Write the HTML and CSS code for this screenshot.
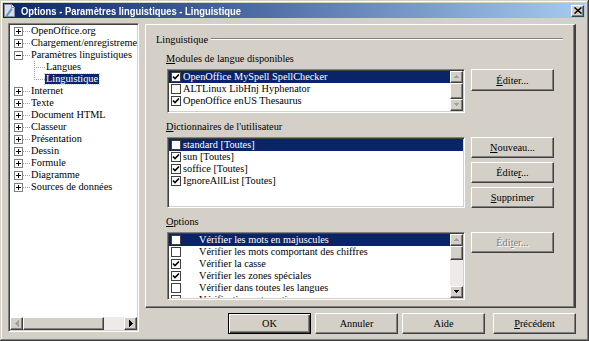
FILE: index.html
```html
<!DOCTYPE html>
<html>
<head>
    <title>Options - Paramètres linguistiques - Linguistique</title>
    <link rel="stylesheet" href="styles.css">
</head>
<body>
<div class="window">
    <div class="titlebar">
        <svg class="app-icon" width="11" height="13" viewBox="0 0 11 13">
            <path d="M0.5 0.5h7l3 3v9h-10z" fill="#dcdce8" stroke="#8a8aa0"/>
            <path d="M7.5 0.5v3h3" fill="#ffffff" stroke="#8a8aa0"/>
            <path d="M2 11l5-7 1.5 1.5-5 7z" fill="#5a9ad8"/>
            <path d="M2 11l1.5 1.5-2 0.5z" fill="#3aa070"/>
        </svg>
        <span class="title">Options - Paramètres linguistiques - Linguistique</span>
        <div class="close-btn">
            <svg width="8" height="7" viewBox="0 0 8 7"><path d="M0.5 0.5l7 6M7.5 0.5l-7 6" stroke="#000" stroke-width="1.5"/></svg>
        </div>
    </div>

    <div class="main">
        <div class="tree">
            <div class="tree-items">
                <div class="node"><span class="exp"></span><span class="link"></span><span class="label">OpenOffice.org</span></div>
                <div class="node"><span class="exp"></span><span class="link"></span><span class="label">Chargement/enregistrement</span></div>
                <div class="node"><span class="exp open"></span><span class="link"></span><span class="label">Paramètres linguistiques</span></div>
                <div class="node child"><span class="branch"></span><span class="label">Langues</span></div>
                <div class="node child"><span class="branch last"></span><span class="label selected">Linguistique</span></div>
                <div class="node"><span class="exp"></span><span class="link"></span><span class="label">Internet</span></div>
                <div class="node"><span class="exp"></span><span class="link"></span><span class="label">Texte</span></div>
                <div class="node"><span class="exp"></span><span class="link"></span><span class="label">Document HTML</span></div>
                <div class="node"><span class="exp"></span><span class="link"></span><span class="label">Classeur</span></div>
                <div class="node"><span class="exp"></span><span class="link"></span><span class="label">Présentation</span></div>
                <div class="node"><span class="exp"></span><span class="link"></span><span class="label">Dessin</span></div>
                <div class="node"><span class="exp"></span><span class="link"></span><span class="label">Formule</span></div>
                <div class="node"><span class="exp"></span><span class="link"></span><span class="label">Diagramme</span></div>
                <div class="node"><span class="exp"></span><span class="link"></span><span class="label">Sources de données</span></div>
            </div>
            <div class="hscroll">
                <div class="sbtn"><svg width="4" height="7" viewBox="0 0 4 7"><path d="M3 0h1v7h-1zM2 1h1v5h-1zM1 2h1v3h-1zM0 3h1v1h-1z" fill="#a0a0a0"/></svg></div>
                <div class="thumb h-thumb"></div>
                <div class="track"></div>
                <div class="sbtn"><svg width="4" height="7" viewBox="0 0 4 7"><path d="M0 0h1v7h-1zM1 1h1v5h-1zM2 2h1v3h-1zM3 3h1v1h-1z" fill="#000"/></svg></div>
            </div>
        </div>

        <div class="right">
            <div class="page">
                <div class="group-title"><span>Linguistique</span><span class="rule"></span></div>

                <div class="section">
                    <div class="caption"><u>M</u>odules de langue disponibles</div>
                    <div class="section-row">
                        <div class="listbox modules">
                            <div class="rows">
                                <div class="row selected"><span class="check"><svg width="8" height="8" viewBox="0 0 8 8"><path d="M1 3.5l2 2 4-4" fill="none" stroke="#000" stroke-width="1.6"/></svg></span><span class="text">OpenOffice MySpell SpellChecker</span></div>
                                <div class="row"><span class="check"></span><span class="text">ALTLinux LibHnj Hyphenator</span></div>
                                <div class="row"><span class="check"><svg width="8" height="8" viewBox="0 0 8 8"><path d="M1 3.5l2 2 4-4" fill="none" stroke="#000" stroke-width="1.6"/></svg></span><span class="text">OpenOffice enUS Thesaurus</span></div>
                            </div>
                            <div class="vscroll">
                                <div class="sbtn"><svg width="7" height="4" viewBox="0 0 7 4"><path d="M3 0h1v1h-1zM2 1h3v1h-3zM1 2h5v1h-5z" fill="#a0a0a0"/></svg></div>
                                <div class="thumb"></div>
                                <div class="sbtn"><svg width="7" height="4" viewBox="0 0 7 4"><path d="M1 0h5v1h-5zM2 1h3v1h-3zM3 2h1v1h-1z" fill="#a0a0a0"/></svg></div>
                            </div>
                        </div>
                        <div class="side-buttons">
                            <button class="btn tall"><u>É</u>diter...</button>
                        </div>
                    </div>
                </div>

                <div class="section">
                    <div class="caption"><u>D</u>ictionnaires de l'utilisateur</div>
                    <div class="section-row">
                        <div class="listbox dicts">
                            <div class="rows">
                                <div class="row selected"><span class="check"></span><span class="text">standard [Toutes]</span></div>
                                <div class="row"><span class="check"><svg width="8" height="8" viewBox="0 0 8 8"><path d="M1 3.5l2 2 4-4" fill="none" stroke="#000" stroke-width="1.6"/></svg></span><span class="text">sun [Toutes]</span></div>
                                <div class="row"><span class="check"><svg width="8" height="8" viewBox="0 0 8 8"><path d="M1 3.5l2 2 4-4" fill="none" stroke="#000" stroke-width="1.6"/></svg></span><span class="text">soffice [Toutes]</span></div>
                                <div class="row"><span class="check"><svg width="8" height="8" viewBox="0 0 8 8"><path d="M1 3.5l2 2 4-4" fill="none" stroke="#000" stroke-width="1.6"/></svg></span><span class="text">IgnoreAllList [Toutes]</span></div>
                            </div>
                        </div>
                        <div class="side-buttons">
                            <button class="btn"><u>N</u>ouveau...</button>
                            <button class="btn">Édite<u>r</u>...</button>
                            <button class="btn"><u>S</u>upprimer</button>
                        </div>
                    </div>
                </div>

                <div class="section">
                    <div class="caption"><u>O</u>ptions</div>
                    <div class="section-row">
                        <div class="listbox options">
                            <div class="rows">
                                <div class="row selected"><span class="check"></span><span class="text wide">Vérifier les mots en majuscules</span></div>
                                <div class="row"><span class="check"></span><span class="text wide">Vérifier les mots comportant des chiffres</span></div>
                                <div class="row"><span class="check"><svg width="8" height="8" viewBox="0 0 8 8"><path d="M1 3.5l2 2 4-4" fill="none" stroke="#000" stroke-width="1.6"/></svg></span><span class="text wide">Vérifier la casse</span></div>
                                <div class="row"><span class="check"><svg width="8" height="8" viewBox="0 0 8 8"><path d="M1 3.5l2 2 4-4" fill="none" stroke="#000" stroke-width="1.6"/></svg></span><span class="text wide">Vérifier les zones spéciales</span></div>
                                <div class="row"><span class="check"></span><span class="text wide">Vérifier dans toutes les langues</span></div>
                                <div class="row"><span class="check"></span><span class="text wide">Vérification automatique</span></div>
                            </div>
                            <div class="vscroll">
                                <div class="sbtn"><svg width="7" height="4" viewBox="0 0 7 4"><path d="M3 0h1v1h-1zM2 1h3v1h-3zM1 2h5v1h-5z" fill="#a0a0a0"/></svg></div>
                                <div class="thumb short"></div>
                                <div class="track"></div>
                                <div class="sbtn"><svg width="7" height="4" viewBox="0 0 7 4"><path d="M1 0h5v1h-5zM2 1h3v1h-3zM3 2h1v1h-1z" fill="#000"/></svg></div>
                            </div>
                        </div>
                        <div class="side-buttons">
                            <button class="btn disabled">Édi<u>t</u>er...</button>
                        </div>
                    </div>
                </div>
            </div>

            <div class="dialog-buttons">
                <button class="btn default">OK</button>
                <button class="btn">Annuler</button>
                <button class="btn">Aide</button>
                <button class="btn back"><u>P</u>récédent</button>
            </div>
        </div>
    </div>
</div>
</body>
</html>
```

FILE: styles.css
```css
body {
    margin: 0;
    font-family: "Liberation Serif", "Times New Roman", serif;
    font-size: 10.3px;
    background-color: #d4d0c8;
}
.window {
    width: 589px;
    height: 341px;
    box-sizing: border-box;
    padding: 3px 4px 0 3px;
    background-color: #d4d0c8;
    box-shadow: inset -1px -1px #404040, inset 1px 1px #d4d0c8, inset -2px -2px #808080, inset 2px 2px #fff;
    overflow: hidden;
}
.titlebar {
    height: 15px;
    display: flex;
    align-items: center;
    padding: 0 1px 0 1px;
    background: linear-gradient(to right, #0a246a, #a6caf0);
}
.app-icon {
    margin-right: 6px;
}
.title {
    flex: 1;
    color: white;
    font-family: "Liberation Sans", Arial, sans-serif;
    font-weight: bold;
    font-size: 11px;
    white-space: nowrap;
    transform: scaleX(0.855);
    transform-origin: left center;
}
.close-btn {
    width: 13px;
    height: 12px;
    box-sizing: border-box;
    display: flex;
    align-items: center;
    justify-content: center;
    background-color: #d4d0c8;
    border: 1px solid;
    border-color: #fff #404040 #404040 #fff;
    box-shadow: inset -1px -1px #808080;
}

.main {
    display: flex;
    gap: 6px;
    padding: 5px 0 0 5px;
}

/* tree */
.tree {
    width: 131px;
    height: 309px;
    box-sizing: border-box;
    display: flex;
    flex-direction: column;
    background-color: white;
    border: 1px solid;
    border-color: #808080 #fff #fff #808080;
    box-shadow: inset 1px 1px #404040, inset -1px -1px #d4d0c8;
    padding: 1px;
}
.tree-items {
    flex: 1;
    overflow: hidden;
    white-space: nowrap;
}
.node {
    height: 12px;
    display: flex;
    align-items: center;
    padding-left: 4px;
}
.node.child {
    padding-left: 24px;
}
.exp {
    width: 9px;
    height: 9px;
    box-sizing: border-box;
    flex-shrink: 0;
    border: 1px solid #808080;
    background: linear-gradient(#000, #000) center / 5px 1px no-repeat,
                linear-gradient(#000, #000) center / 1px 5px no-repeat,
                #fff;
}
.exp.open {
    background: linear-gradient(#000, #000) center / 5px 1px no-repeat, #fff;
}
.link {
    width: 7px;
    height: 1px;
    flex-shrink: 0;
    background: repeating-linear-gradient(to right, #a0a0a0 0 1px, transparent 1px 2px);
}
.branch {
    width: 11px;
    height: 12px;
    flex-shrink: 0;
    background: repeating-linear-gradient(to bottom, #a0a0a0 0 1px, transparent 1px 2px) 0 0 / 1px 100% no-repeat,
                repeating-linear-gradient(to right, #a0a0a0 0 1px, transparent 1px 2px) 0 6px / 100% 1px no-repeat;
}
.branch.last {
    background: repeating-linear-gradient(to bottom, #a0a0a0 0 1px, transparent 1px 2px) 0 0 / 1px 7px no-repeat,
                repeating-linear-gradient(to right, #a0a0a0 0 1px, transparent 1px 2px) 0 6px / 100% 1px no-repeat;
}
.label {
    margin-left: 1px;
    line-height: 12px;
}
.label.selected {
    margin-left: 0;
    padding: 0 1px;
    line-height: 10px;
    background-color: #0a246a;
    color: white;
    outline: 1px dotted #d4d0c8;
}

/* scrollbars */
.hscroll {
    height: 13px;
    display: flex;
    flex-shrink: 0;
}
.vscroll {
    width: 13px;
    display: flex;
    flex-direction: column;
    flex-shrink: 0;
}
.sbtn, .thumb {
    box-sizing: border-box;
    background-color: #d4d0c8;
    border: 1px solid;
    border-color: #fff #404040 #404040 #fff;
    box-shadow: inset -1px -1px #808080;
}
.sbtn {
    width: 13px;
    height: 13px;
    flex-shrink: 0;
    display: flex;
    align-items: center;
    justify-content: center;
}
.vscroll .sbtn {
    height: 12px;
}
.thumb {
    flex: 1;
}
.thumb.short {
    flex: 0 0 14px;
}
.h-thumb {
    flex: 0 0 81px;
}
.track {
    flex: 1;
    background-color: #eeeaea;
}

/* right page */
.right {
    width: 431px;
    display: flex;
    flex-direction: column;
    margin-top: 1px;
}
.page {
    height: 284px;
    box-sizing: border-box;
    border-top: 1px solid #fff;
    border-left: 1px solid #fff;
    border-right: 2px solid #404040;
    border-bottom: 1px solid #404040;
    box-shadow: inset -1px -1px #808080;
}
.group-title {
    display: flex;
    align-items: center;
    height: 12px;
    margin: 8px 11px 0 10px;
}
.group-title .rule {
    flex: 1;
    margin-left: 3px;
    border-top: 1px solid #808080;
    border-bottom: 1px solid #fff;
}
.section {
    padding-left: 21px;
    margin-top: 8px;
}
.section:first-of-type {
    margin-top: 2px;
}
.caption {
    height: 12px;
    line-height: 12px;
    margin-left: -1px;
}
.section-row {
    display: flex;
    gap: 6px;
    margin-top: 4px;
}
.section:first-of-type .section-row {
    margin-top: 6px;
}
.listbox {
    width: 298px;
    box-sizing: border-box;
    display: flex;
    background-color: white;
    border: 1px solid;
    border-color: #808080 #fff #fff #808080;
    box-shadow: inset 1px 1px #404040, inset -1px -1px #d4d0c8;
    padding: 1px;
    overflow: hidden;
}
.listbox.modules {
    height: 44px;
}
.listbox.dicts {
    height: 71px;
}
.listbox.options {
    height: 68px;
}
.rows {
    flex: 1;
    overflow: hidden;
    white-space: nowrap;
}
.row {
    height: 12px;
    display: flex;
    align-items: center;
    padding-left: 2px;
}
.row.selected {
    background-color: #0a246a;
    color: white;
}
.check {
    width: 10px;
    height: 10px;
    box-sizing: border-box;
    flex-shrink: 0;
    display: flex;
    align-items: center;
    justify-content: center;
    background-color: white;
    border: 1px solid #404040;
}
.text {
    margin-left: 2px;
    line-height: 12px;
}
.text.wide {
    margin-left: 18px;
}

/* buttons */
.side-buttons {
    display: flex;
    flex-direction: column;
    gap: 4px;
}
.btn {
    width: 83px;
    height: 21px;
    box-sizing: border-box;
    padding: 0;
    font-family: inherit;
    font-size: inherit;
    font-weight: normal;
    color: black;
    background-color: #d4d0c8;
    border: 1px solid;
    border-color: #fff #404040 #404040 #fff;
    box-shadow: inset -1px -1px #808080;
}
.btn.tall {
    height: 22px;
}
.btn.disabled {
    color: #808080;
    text-shadow: 1px 1px #fff;
}
.btn.default {
    border-color: #000;
    box-shadow: inset 1px 1px #fff, inset -1px -1px #404040, inset -2px -2px #808080;
}
.dialog-buttons {
    display: flex;
    justify-content: flex-end;
    gap: 4px;
    margin-top: 5px;
}
.btn.back {
    margin-left: 4px;
}
```
